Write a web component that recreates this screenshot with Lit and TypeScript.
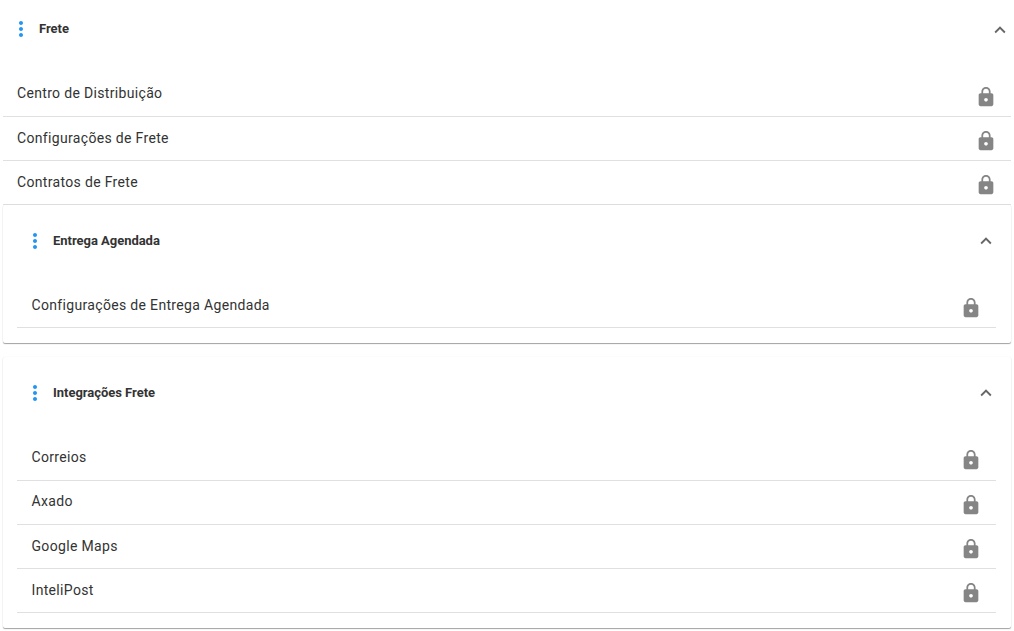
import { LitElement, html, css, svg } from "lit";
import { customElement } from "lit/decorators.js";

const lock = html`<svg class="lock" viewBox="0 0 24 24"><path d="M18 8h-1V6c0-2.76-2.24-5-5-5S7 3.24 7 6v2H6c-1.1 0-2 .9-2 2v10c0 1.1.9 2 2 2h12c1.1 0 2-.9 2-2V10c0-1.1-.9-2-2-2zm-6 9c-1.1 0-2-.9-2-2s.9-2 2-2 2 .9 2 2-.9 2-2 2zm3.1-9H8.9V6c0-1.71 1.39-3.1 3.1-3.1 1.71 0 3.1 1.39 3.1 3.1v2z"/></svg>`;
const chevron = svg`<svg class="chev" viewBox="0 0 24 24"><path d="M7.41 15.41 12 10.83l4.59 4.58L18 14l-6-6-6 6z"/></svg>`;
const dots = html`<svg class="dots" viewBox="0 0 24 24"><path d="M12 8c1.1 0 2-.9 2-2s-.9-2-2-2-2 .9-2 2 .9 2 2 2zm0 2c-1.1 0-2 .9-2 2s.9 2 2 2 2-.9 2-2-.9-2-2-2zm0 6c-1.1 0-2 .9-2 2s.9 2 2 2 2-.9 2-2-.9-2-2-2z"/></svg>`;

@customElement("app-root")
export class AppRoot extends LitElement {
  static styles = css`
    :host { display: block; width: 1014px; height: 631px; overflow: hidden; background: #fff;
      font-family: Roboto, "Liberation Sans", sans-serif; color: #333; }
    .page { display: flex; flex-direction: column; padding: 0 3px; }
    .panel { display: flex; flex-direction: column; }
    .card { background: #fff; border-radius: 2px; padding: 0 15px 14.8px 14px;
      box-shadow: 0 1px 1px rgba(0,0,0,.36), 0 0 2px rgba(0,0,0,.05); }
    .card + .card { margin-top: 14px; }
    .head { display: flex; align-items: center; height: 58px; flex: none; }
    .card .head { height: 71px; }
    .dots { width: 24px; height: 24px; fill: #2196f3; margin-left: 6px; flex: none; }
    .title { margin: 0 0 2px 6px; font-size: 13px; font-weight: 700; flex: 1; color: #333; letter-spacing: -.03px; }
    .card .title { margin-bottom: 0; }
    .chev { width: 22px; height: 22px; fill: #666; margin: 2px 0 0 0; flex: none; }
    .card .chev { margin: 0 -1px 0 0; }
    .rows { display: flex; flex-direction: column; padding-top: 14.5px; }
    .card .rows { padding-top: 8.15px; }
    .row { display: flex; align-items: center; justify-content: space-between; height: 44.2px;
      box-sizing: border-box; border-bottom: 1px solid #e0e0e0; font-size: 14px; letter-spacing: .33px; line-height: 20px; }
    .label { margin: 0 0 1.5px 14px; }
    .card .label { margin-left: 14.5px; }
    .lock { width: 22px; height: 22px; fill: #858585; margin: 5px 14px 0 0; flex: none; }
    .stack { display: flex; flex-direction: column; }
  `;

  private rows(items: string[]) {
    return html`<div class="rows">${items.map(t => html`<div class="row"><span class="label">${t}</span>${lock}</div>`)}</div>`;
  }

  private header(t: string) {
    return html`<div class="head">${dots}<span class="title">${t}</span>${chevron}</div>`;
  }

  render() {
    return html`<div class="page">
      <section class="panel">
        ${this.header("Frete")}
        ${this.rows(["Centro de Distribuição", "Configurações de Frete", "Contratos de Frete"])}
      </section>
      <div class="stack">
        <section class="card">
          ${this.header("Entrega Agendada")}
          ${this.rows(["Configurações de Entrega Agendada"])}
        </section>
        <section class="card">
          ${this.header("Integrações Frete")}
          ${this.rows(["Correios", "Axado", "Google Maps", "InteliPost"])}
        </section>
      </div>
    </div>`;
  }
}
